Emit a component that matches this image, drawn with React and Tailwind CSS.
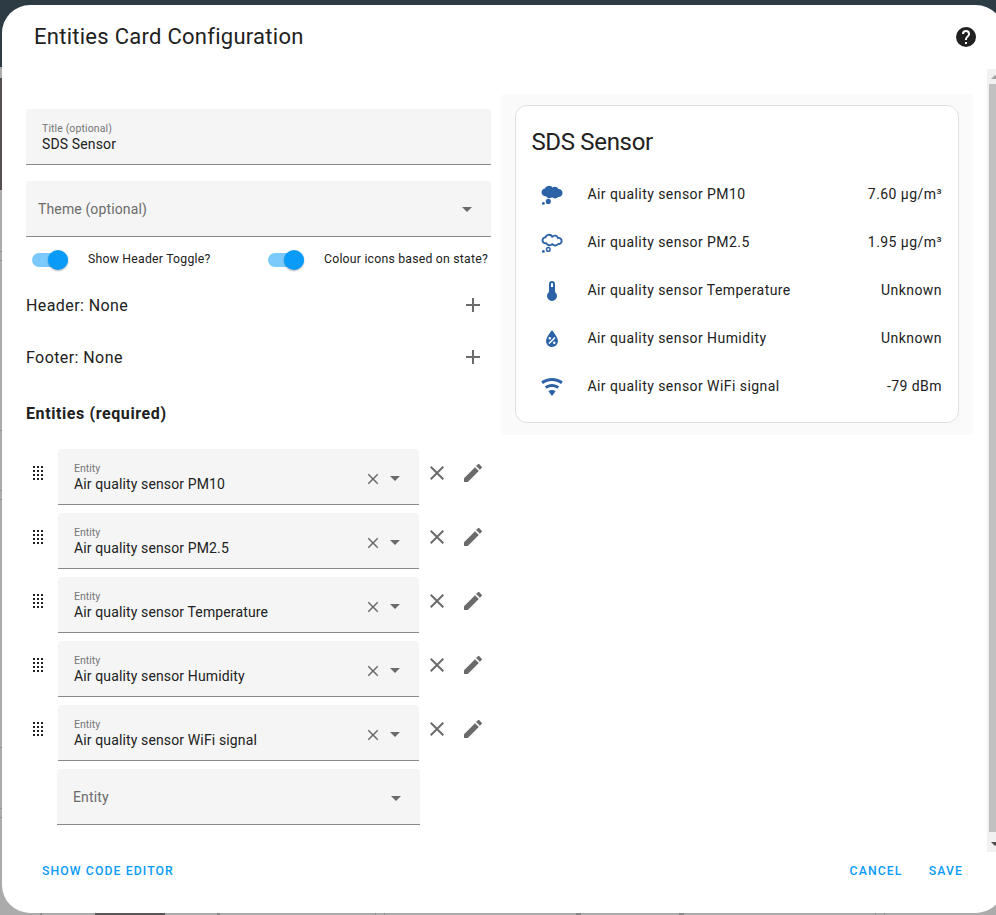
const PATHS = {
  close:
    'M19,6.41L17.59,5L12,10.59L6.41,5L5,6.41L10.59,12L5,17.59L6.41,19L12,13.41L17.59,19L19,17.59L13.41,12L19,6.41Z',
  pencil:
    'M20.71,7.04C21.1,6.65 21.1,6 20.71,5.63L18.37,3.29C18,2.9 17.35,2.9 16.96,3.29L15.12,5.12L18.87,8.87M3,17.25V21H6.75L17.81,9.93L14.06,6.18L3,17.25Z',
  plus: 'M19,13H13V19H11V13H5V11H11V5H13V11H19V13Z',
  help: 'M15.07,11.25L14.17,12.17C13.45,12.89 13,13.5 13,15H11V14.5C11,13.39 11.45,12.39 12.17,11.67L13.41,10.41C13.78,10.05 14,9.55 14,9C14,7.89 13.1,7 12,7A2,2 0 0,0 10,9H8A4,4 0 0,1 12,5A4,4 0 0,1 16,9C16,9.88 15.64,10.67 15.07,11.25M13,19H11V17H13M12,2A10,10 0 0,0 2,12A10,10 0 0,0 12,22A10,10 0 0,0 22,12C22,6.47 17.5,2 12,2Z',
  thermometer:
    'M15 13V5A3 3 0 0 0 9 5V13A5 5 0 1 0 15 13M12 4A1 1 0 0 1 13 5V8H11V5A1 1 0 0 1 12 4Z',
  water:
    'M12,3.25C12,3.25 6,10 6,14C6,17.32 8.69,20 12,20A6,6 0 0,0 18,14C18,10 12,3.25 12,3.25M14.47,9.97L15.53,11.03L9.53,17.03L8.47,15.97M9.75,10A1.25,1.25 0 0,1 11,11.25A1.25,1.25 0 0,1 9.75,12.5A1.25,1.25 0 0,1 8.5,11.25A1.25,1.25 0 0,1 9.75,10M14.25,14.5A1.25,1.25 0 0,1 15.5,15.75A1.25,1.25 0 0,1 14.25,17A1.25,1.25 0 0,1 13,15.75A1.25,1.25 0 0,1 14.25,14.5Z',
  wifi: 'M12,21L15.6,16.2C14.6,15.45 13.35,15 12,15C10.65,15 9.4,15.45 8.4,16.2L12,21M12,3C7.95,3 4.21,4.34 1.2,6.6L3,9C5.5,7.12 8.62,6 12,6C15.38,6 18.5,7.12 21,9L22.8,6.6C19.79,4.34 16.05,3 12,3M12,9C9.3,9 6.81,9.89 4.8,11.4L6.6,13.8C8.1,12.67 9.97,12 12,12C14.03,12 15.9,12.67 17.4,13.8L19.2,11.4C17.19,9.89 14.7,9 12,9Z',
};

function Icon({ name, className = 'size-6' }) {
  return (
    <svg viewBox="0 0 24 24" className={`shrink-0 ${className}`} fill="currentColor" fillRule="evenodd">
      <path d={PATHS[name]} />
    </svg>
  );
}

function Bubble({ filled }) {
  return (
    <svg viewBox="0 0 24 24" className="size-6 shrink-0" fill={filled ? 'currentColor' : 'none'} stroke="currentColor">
      <path
        strokeWidth="1.9"
        strokeLinejoin="round"
        d="M5.4 6.4A3.7 3.7 0 0 1 12.2 5.8A3.3 3.3 0 0 1 17.9 7A3.05 3.05 0 1 1 18.2 13A3.9 3.9 0 0 1 12.2 13.1A3.7 3.7 0 0 1 6.2 12.2A2.95 2.95 0 1 1 5.4 6.4Z"
      />
      <circle cx="8.3" cy="18.4" r="1.8" strokeWidth="1.5" />
      <circle cx="3.4" cy="20.4" r="1.4" fill="currentColor" stroke="none" />
    </svg>
  );
}

function Caret() {
  return (
    <svg viewBox="0 0 10 5" className="h-[5px] w-[10px] shrink-0 text-[#6b6b6b]" fill="currentColor">
      <path d="M0 0H10L5 5Z" />
    </svg>
  );
}

function DragHandle() {
  return (
    <div className="ml-[7px] mr-[15px] mt-[17px] grid h-[14px] w-[10px] grid-cols-3 gap-[2px]">
      {Array.from({ length: 12 }, (_, i) => (
        <span key={i} className="size-[2px] bg-[#212121]" />
      ))}
    </div>
  );
}

function Toggle({ label }) {
  return (
    <div className="flex items-center">
      <div className="ml-[6px] flex h-[14px] w-[36px] items-center justify-end rounded-full bg-[#7cc9fb]">
        <span className="size-5 shrink-0 rounded-full bg-[#0a9bf8] shadow-[0_1px_2px_rgba(0,0,0,0.3)]" />
      </div>
      <span className="mb-[2px] ml-5 whitespace-nowrap text-[12.25px] leading-5 tracking-[0.22px]">{label}</span>
    </div>
  );
}

function Section({ label }) {
  return (
    <div className="flex h-[52px] items-center justify-between pr-[6px] text-[16px] tracking-[0.42px]">
      <span className="pt-[2px]">{label}</span>
      <Icon name="plus" className="size-6 text-[#6b6b6b]" />
    </div>
  );
}

function EntityRow({ name }) {
  return (
    <div className="mb-2 flex h-14">
      <DragHandle />
      <div className="flex h-14 w-[361px] justify-between rounded-t border-b border-[#8a8a8a] bg-[#f5f5f5] pl-4 pr-[19px]">
        <div className="flex flex-col pt-[13px]">
          <span className="text-[10.5px] leading-[13px] text-[#767676]">Entity</span>
          <span className="text-[14px] leading-[18px] tracking-[0.13px]">{name}</span>
        </div>
        <div className="flex items-center gap-[8px] pt-[4px] text-[#6b6b6b]">
          <Icon name="close" className="size-[18px]" />
          <Caret />
        </div>
      </div>
      <div className="ml-[6px] mt-3 flex gap-3 text-[#6b6b6b]">
        <Icon name="close" />
        <Icon name="pencil" />
      </div>
    </div>
  );
}

const ENTITIES = ['PM10', 'PM2.5', 'Temperature', 'Humidity', 'WiFi signal'].map((s) => `Air quality sensor ${s}`);

const STATES = [
  { icon: <Bubble filled />, value: '7.60 µg/m³' },
  { icon: <Bubble />, value: '1.95 µg/m³' },
  { icon: <Icon name="thermometer" />, value: 'Unknown' },
  { icon: <Icon name="water" />, value: 'Unknown' },
  { icon: <Icon name="wifi" />, value: '-79 dBm' },
];

function Preview() {
  return (
    <div className="ml-[10px] mt-[25px] h-[341px] w-[472px] rounded bg-[#fafafa] pl-[14px] pt-[11px]">
      <div className="h-[318px] w-[444px] rounded-xl border border-[#e0e0e0] bg-white pl-[15.4px] pr-4">
        <h2 className="pt-[20px] text-[24px] leading-8 tracking-[-0.32px]">SDS Sensor</h2>
        <div className="mt-3 text-[14px] tracking-[0.44px]">
          {STATES.map(({ icon, value }, i) => (
            <div key={ENTITIES[i]} className="flex h-12 items-center">
              <span className="ml-[8.6px] mr-[23.4px] pt-[2px] text-[#2c63a6]">{icon}</span>
              <span className="grow">{ENTITIES[i]}</span>
              <span>{value}</span>
            </div>
          ))}
        </div>
      </div>
    </div>
  );
}

function Scrollbar() {
  return (
    <div className="ml-auto flex h-[783px] w-[15px] flex-col items-center bg-[#f1f1f1]">
      <div className="flex h-[15px] items-center">
        <svg viewBox="0 0 8 4" className="h-1 w-2" fill="#a3a3a3">
          <path d="M0 4L4 0L8 4Z" />
        </svg>
      </div>
      <div className="h-[748px] w-[11px] bg-[#c1c1c1]" />
      <div className="flex h-[20px] items-center pt-1">
        <svg viewBox="0 0 8 4" className="h-1 w-2" fill="#505050">
          <path d="M0 0H8L4 4Z" />
        </svg>
      </div>
    </div>
  );
}

/* The dimmed dashboard that shows around the dialog's edges */
function Backdrop() {
  return (
    <div className="absolute inset-0 flex flex-col bg-[#ababab]">
      <div className="h-[67px] bg-[#2d3b44]" />
      <div className="mt-[11px] h-[112px] w-[2px] bg-[#565053]" />
      <div className="mt-[61px] h-px w-[2px] bg-[#8f8f8f]" />
      <div className="mt-[8px] h-px w-[2px] bg-[#8f8f8f]" />
      <div className="mt-[169px] h-px w-[2px] bg-[#8f8f8f]" />
      <div className="mt-[59px] h-px w-[2px] bg-[#8f8f8f]" />
      <div className="mt-[8px] h-px w-[2px] bg-[#8f8f8f]" />
      <div className="mt-[247px] h-px w-[2px] bg-[#8f8f8f]" />
      <div className="mt-[60px] h-px w-[2px] bg-[#8f8f8f]" />
      <div className="mt-[8px] h-px w-[2px] bg-[#8f8f8f]" />
      <div className="mt-auto flex h-[2px]">
        <span className="ml-[40px] w-[2px] bg-[#888]" />
        <span className="ml-[53px] w-[70px] bg-[#5d5658]" />
        <span className="ml-[52px] w-[3px] bg-[#888]" />
        <span className="ml-[155px] w-px bg-[#8f8f8f]" />
        <span className="ml-[8px] w-px bg-[#8f8f8f]" />
        <span className="ml-[191px] w-[5px] bg-[#888]" />
        <span className="ml-[98px] w-[5px] bg-[#888]" />
        <span className="ml-[191px] w-px bg-[#8f8f8f]" />
        <span className="ml-[8px] w-px bg-[#8f8f8f]" />
      </div>
    </div>
  );
}

export default function App() {
  return (
    <div className="relative h-[915px] w-[996px] overflow-hidden font-[Roboto,sans-serif] text-[#212121]">
      <Backdrop />
      <main className="relative ml-[2px] mt-[5px] flex h-[908px] w-[1002px] flex-col overflow-hidden rounded-[28px] bg-white">
        <header className="flex h-16 items-center justify-between pl-8 pr-[26px]">
          <h1 className="text-[22px] leading-8 tracking-[0.27px]">Entities Card Configuration</h1>
          <Icon name="help" />
        </header>
        <div className="flex h-[783px] pr-[2px]">
          <div className="ml-6 w-[465px] pt-10">
            <div className="flex h-14 flex-col rounded-t border-b border-[#8a8a8a] bg-[#f5f5f5] pl-4 pt-[13px]">
              <span className="text-[10.5px] leading-[13px] tracking-[0.11px] text-[#767676]">Title (optional)</span>
              <span className="text-[14px] leading-[18px] tracking-[0.13px]">SDS Sensor</span>
            </div>
            <div className="mt-4 flex h-14 items-center justify-between rounded-t border-b border-[#8a8a8a] bg-[#f5f5f5] pl-3 pr-[19px] pt-[2px] text-[14px] tracking-[0.13px] text-[#6b6b6b]">
              Theme (optional)
              <Caret />
            </div>
            <div className="mt-3 grid h-[22px] grid-cols-[236px_auto]">
              <Toggle label="Show Header Toggle?" />
              <Toggle label="Colour icons based on state?" />
            </div>
            <div className="mt-2">
              <Section label="Header: None" />
              <Section label="Footer: None" />
            </div>
            <h3 className="mt-[19px] text-[16px] font-bold leading-6 tracking-[0.6px]">Entities (required)</h3>
            <div className="mt-[23px]">
              {ENTITIES.map((name) => (
                <EntityRow key={name} name={name} />
              ))}
            </div>
            <div className="ml-[31px] flex h-14 w-[363px] items-center justify-between rounded-t border-b border-[#8a8a8a] bg-[#f5f5f5] pl-4 pr-[19px] pt-[3px] text-[14px] tracking-[0.13px] text-[#6b6b6b]">
              <span className="pb-[2px]">Entity</span>
              <Caret />
            </div>
          </div>
          <Preview />
          <Scrollbar />
        </div>
        <footer className="flex h-9 items-center pl-10 pr-[41px] pt-[2px] text-[12.25px] font-medium tracking-[1.09px] text-[#0a9bf8]">
          <span className="grow">SHOW CODE EDITOR</span>
          <span>CANCEL</span>
          <span className="ml-[26.3px]">SAVE</span>
        </footer>
      </main>
    </div>
  );
}
